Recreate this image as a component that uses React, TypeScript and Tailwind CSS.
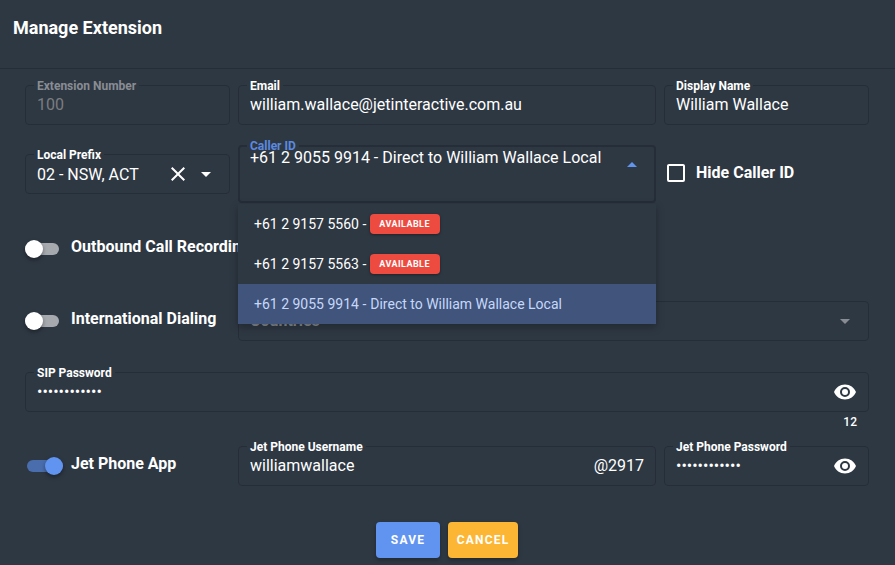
import { useId, type ReactNode } from "react";

function Caret({ className = "" }: { className?: string }) {
  return (
    <svg viewBox="0 0 24 24" aria-hidden="true" className={`pointer-events-none size-6 shrink-0 fill-current ${className}`}>
      <path d="M7 10l5 5 5-5z" />
    </svg>
  );
}

function EyeButton({ label }: { label: string }) {
  return (
    <button type="button" aria-label={label} className="shrink-0 text-white">
      <svg viewBox="0 0 24 24" className="size-6 fill-current">
        <path d="M12,9A3,3 0 0,0 9,12A3,3 0 0,0 12,15A3,3 0 0,0 15,12A3,3 0 0,0 12,9M12,17A5,5 0 0,1 7,12A5,5 0 0,1 12,7A5,5 0 0,1 17,12A5,5 0 0,1 12,17M12,4.5C7,4.5 2.73,7.61 1,12C2.73,16.39 7,19.5 12,19.5C17,19.5 21.27,16.39 23,12C21.27,7.61 17,4.5 12,4.5Z" />
      </svg>
    </button>
  );
}

function FloatingLabel({ id, className = "-top-2 left-2 text-white", children }: { id: string; className?: string; children: ReactNode }) {
  return (
    <label htmlFor={id} className={`absolute bg-[#2e3843] px-[3px] text-xs leading-4 font-bold ${className}`}>
      {children}
    </label>
  );
}

type FieldProps = {
  label: string;
  value: string;
  type?: string;
  disabled?: boolean;
  className?: string;
  children?: ReactNode;
};

function Field({ label, value, type = "text", disabled = false, className = "", children }: FieldProps) {
  const id = useId();
  return (
    <div className={`relative flex h-10 items-center rounded border border-[#252d38] px-[11px] ${className}`}>
      <FloatingLabel id={id} className={disabled ? "-top-2 left-2 text-[#898d93]" : "-top-2 left-2 text-white"}>
        {label}
      </FloatingLabel>
      <input
        id={id}
        type={type}
        defaultValue={value}
        disabled={disabled}
        className="min-w-0 flex-1 bg-transparent text-base leading-5 text-white outline-none disabled:text-[#7c7d80]"
      />
      {children}
    </div>
  );
}

function Toggle({ label, on = false }: { label: string; on?: boolean }) {
  return (
    <label className="flex items-center gap-2 text-base font-bold whitespace-nowrap text-white">
      <input type="checkbox" role="switch" defaultChecked={on} className="peer sr-only" />
      <span className="relative mt-1 flex h-3 w-[38px] items-center before:mr-1 before:h-3 before:w-full before:rounded-full before:bg-[#a6a9ae] peer-checked:before:mr-0 peer-checked:before:ml-[2px] peer-checked:before:bg-[#4a6ead] peer-checked:[&>span]:left-5 peer-checked:[&>span]:bg-[#6194f0]">
        <span className="absolute left-0 size-[18px] rounded-full bg-white shadow-[0_2px_4px_rgba(0,0,0,0.4)]" />
      </span>
      <span>{label}</span>
    </label>
  );
}

function Option({ number, selected = false, children }: { number: string; selected?: boolean; children: ReactNode }) {
  return (
    <li
      role="option"
      aria-selected={selected}
      className={`flex h-10 items-center gap-1 px-4 text-sm ${selected ? "bg-[#41547b] text-[#c6d8fa]" : "text-white"}`}
    >
      <span>{number} -</span>
      {children}
    </li>
  );
}

function AvailableChip() {
  return (
    <span className="flex h-5 min-w-[70px] items-center rounded bg-[#ed4b40] px-[9px] text-[9px] font-bold tracking-wider text-white uppercase shadow-[0_1px_3px_rgba(0,0,0,0.4)]">
      Available
    </span>
  );
}

function CallerId() {
  return (
    <div className="relative col-span-6 flex h-[58px] items-start rounded border-2 border-[#252d38] px-[10px] pt-px">
      <FloatingLabel id="caller-id" className="-top-[9px] left-[7px] text-[#5b8ae0]">
        Caller ID
      </FloatingLabel>
      <input
        id="caller-id"
        role="combobox"
        aria-expanded="true"
        aria-controls="caller-id-options"
        readOnly
        defaultValue="+61 2 9055 9914 - Direct to William Wallace Local"
        className="relative min-w-0 flex-1 bg-transparent text-base leading-5 text-white outline-none"
      />
      <Caret className="mt-[5px] rotate-180 text-[#6194f0]" />
      <ul
        id="caller-id-options"
        role="listbox"
        aria-label="Caller ID"
        className="absolute -inset-x-[2px] top-[57px] z-10 bg-[#2e3843] shadow-[0_3px_8px_rgba(0,0,0,0.3)]"
      >
        <Option number="+61 2 9157 5560">
          <AvailableChip />
        </Option>
        <Option number="+61 2 9157 5563">
          <AvailableChip />
        </Option>
        <Option number="+61 2 9055 9914" selected>
          <span>Direct to William Wallace Local</span>
        </Option>
      </ul>
    </div>
  );
}

export default function App() {
  return (
    <main className="min-h-screen bg-[#2e3843] font-[Roboto,sans-serif] text-white">
      <header className="flex h-[69px] items-start border-b border-[#252d38] px-[13px] pt-4">
        <h1 className="text-lg leading-6 font-bold">Manage Extension</h1>
      </header>
      <form className="pt-4 pr-[26px] pb-[7px] pl-[25px]" onSubmit={(e) => e.preventDefault()}>
        <div className="grid grid-cols-12 gap-x-2">
          <Field label="Extension Number" value="100" disabled className="col-span-3" />
          <Field label="Email" value="william.wallace@jetinteractive.com.au" className="col-span-6" />
          <Field label="Display Name" value="William Wallace" className="col-span-3" />
        </div>

        <div className="mt-5 grid grid-cols-12 items-center gap-x-2">
          <div className="relative col-span-3 flex h-10 items-center rounded border border-[#252d38] px-[11px]">
            <FloatingLabel id="prefix">Local Prefix</FloatingLabel>
            <select id="prefix" className="min-w-0 flex-1 appearance-none bg-transparent pt-[2px] text-base text-white outline-none">
              <option>02 - NSW, ACT</option>
            </select>
            <button type="button" aria-label="Clear local prefix" className="mr-1">
              <svg viewBox="0 0 24 24" className="size-6 fill-current">
                <path d="M19,6.41L17.59,5L12,10.59L6.41,5L5,6.41L10.59,12L5,17.59L6.41,19L12,13.41L17.59,19L19,17.59L13.41,12L19,6.41Z" />
              </svg>
            </button>
            <Caret />
          </div>
          <CallerId />
          <label className="col-span-3 flex items-center gap-2 pb-[2px] text-base font-bold">
            <input type="checkbox" className="peer sr-only" />
            <svg viewBox="0 0 24 24" aria-hidden="true" className="size-6 fill-current">
              <path d="M19,3H5C3.89,3 3,3.89 3,5V19A2,2 0 0,0 5,21H19A2,2 0 0,0 21,19V5C21,3.89 20.1,3 19,3M19,5V19H5V5H19Z" />
            </svg>
            Hide Caller ID
          </label>
        </div>

        <div className="mt-8">
          <Toggle label="Outbound Call Recording" />
        </div>

        <div className="mt-[42px] grid grid-cols-12 items-center gap-x-2">
          <div className="col-span-3 pb-1">
            <Toggle label="International Dialing" />
          </div>
          <div className="col-span-9 flex h-10 items-center rounded border border-[#252d38] px-[11px] text-[#898d93]">
            <select disabled aria-label="Countries" className="min-w-0 flex-1 appearance-none bg-transparent text-base font-bold opacity-100">
              <option>Countries</option>
            </select>
            <Caret />
          </div>
        </div>

        <Field label="SIP Password" value="abcdefghijkl" type="password" className="mt-[31px]">
          <EyeButton label="Show SIP password" />
        </Field>
        <div className="pt-[2px] pr-3 text-right text-xs leading-4 font-medium">12</div>

        <div className="mt-4 grid grid-cols-12 items-center gap-x-2">
          <div className="col-span-3 pb-1">
            <Toggle label="Jet Phone App" on />
          </div>
          <Field label="Jet Phone Username" value="williamwallace" className="col-span-6">
            <span className="text-base leading-5">@2917</span>
          </Field>
          <Field label="Jet Phone Password" value="abcdefghijkl" type="password" className="col-span-3">
            <EyeButton label="Show Jet Phone password" />
          </Field>
        </div>

        <div className="mt-9 flex justify-center gap-2 text-xs font-bold tracking-widest">
          <button type="submit" className="h-9 min-w-16 rounded bg-[#6194f0] shadow-[0_2px_4px_rgba(0,0,0,0.3)]">
            SAVE
          </button>
          <button type="button" className="h-9 min-w-[70px] rounded bg-[#fdb633] px-2 shadow-[0_2px_4px_rgba(0,0,0,0.3)]">
            CANCEL
          </button>
        </div>
      </form>
    </main>
  );
}
